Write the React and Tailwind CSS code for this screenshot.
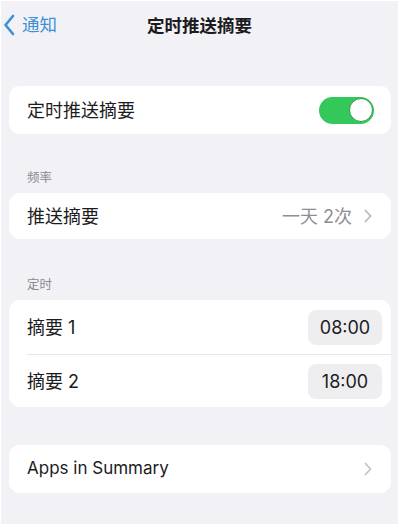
import React from "react";

const font = { fontFamily: 'Inter, "Noto Sans CJK SC", sans-serif' };

function Chevron({ className = "" }) {
  return (
    <svg width="8" height="14" viewBox="0 0 8 14" className={className}>
      <path d="M1.5 1.5 L6.5 7 L1.5 12.5" fill="none" stroke="currentColor" strokeWidth="1.8" strokeLinecap="round" strokeLinejoin="round" />
    </svg>
  );
}

function Toggle() {
  return (
    <div className="w-[55px] h-[27px] rounded-full bg-[#34c759] flex items-center justify-end p-[1.5px]">
      <div className="w-[24px] h-[24px] rounded-full bg-white border-[1.5px] border-[#2a9a48]" />
    </div>
  );
}

export default function App() {
  return (
    <div className="w-[400px] h-[526px] bg-white overflow-hidden" style={font}>
      <div className="w-[397px] h-[523px] mt-px ml-px bg-[#f2f1f6] flex flex-col">
        {/* Nav */}
        <div className="h-[49px] relative flex items-center justify-center">
          <div className="absolute left-[2px] top-[13px] flex items-center gap-[7px] text-[#3d8fd6]">
            <svg width="12" height="22" viewBox="0 0 12 22">
              <path d="M10 2 L2.5 11 L10 20" fill="none" stroke="currentColor" strokeWidth="2.6" strokeLinecap="round" strokeLinejoin="round" />
            </svg>
            <span className="text-[17.5px] leading-none">通知</span>
          </div>
          <span className="text-[17.5px] font-semibold text-[#1c1c1e] leading-none">定时推送摘要</span>
        </div>

        {/* Card 1 */}
        <div className="mt-[36px] ml-[8px] mr-[7px] h-[48px] rounded-[11px] bg-white flex items-center justify-between pl-[18px] pr-[17px]">
          <span className="text-[18px] text-[#1c1c1e]">定时推送摘要</span>
          <Toggle />
        </div>

        {/* Frequency */}
        <div className="mt-[38px] ml-[26px] h-[13px] flex items-center text-[12.5px] leading-none text-[#8a8a8e]">频率</div>
        <div className="mt-[8px] ml-[8px] mr-[7px] h-[46px] rounded-[11px] bg-white flex items-center justify-between pl-[18px] pr-[19px]">
          <span className="text-[18px] text-[#1c1c1e]">推送摘要</span>
          <div className="flex items-center gap-[12px] text-[#8e8e93]">
            <span className="text-[18px]">一天 2次</span>
            <Chevron className="text-[#b8b8bd]" />
          </div>
        </div>

        {/* Timing */}
        <div className="mt-[40px] ml-[26px] h-[13px] flex items-center text-[12.5px] leading-none text-[#8a8a8e]">定时</div>
        <div className="mt-[8px] ml-[8px] mr-[7px] rounded-[11px] bg-white flex flex-col">
          <div className="h-[54px] flex items-center justify-between pl-[18px] pr-[9px]">
            <span className="text-[18px] text-[#1c1c1e]">摘要 1</span>
            <div className="w-[74px] h-[35px] rounded-[8px] bg-[#eeeef1] flex items-center justify-center text-[18px] text-[#1c1c1e]">08:00</div>
          </div>
          <div className="ml-[18px] h-px bg-[#e6e6ea]" />
          <div className="h-[52px] flex items-center justify-between pl-[18px] pr-[9px]">
            <span className="text-[18px] text-[#1c1c1e]">摘要 2</span>
            <div className="w-[74px] h-[35px] rounded-[8px] bg-[#eeeef1] flex items-center justify-center text-[18px] text-[#1c1c1e]">18:00</div>
          </div>
        </div>

        {/* Apps */}
        <div className="mt-[38px] ml-[8px] mr-[7px] h-[48px] rounded-[11px] bg-white flex items-center justify-between pl-[18px] pr-[19px]">
          <span className="text-[17px] text-[#1c1c1e]">Apps in Summary</span>
          <Chevron className="text-[#c4c4c8]" />
        </div>
      </div>
    </div>
  );
}
